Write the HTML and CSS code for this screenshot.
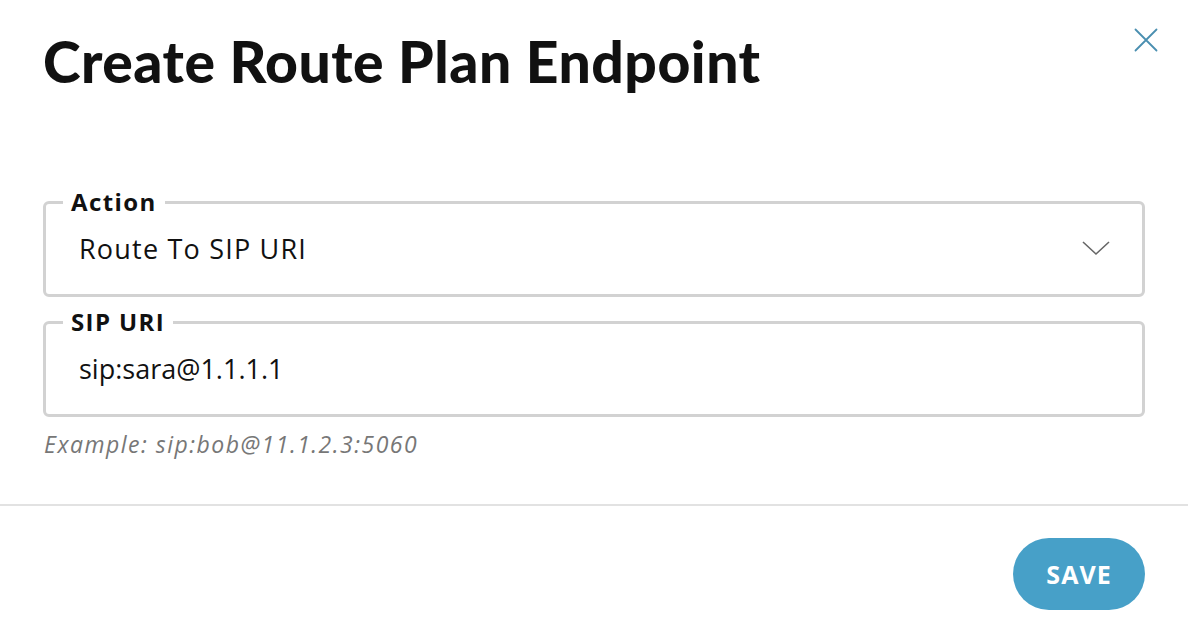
FILE: index.html
```html
<!DOCTYPE html>
<html lang="en">

<head>
    <meta charset="UTF-8">
    <meta name="viewport" content="width=device-width, initial-scale=1.0">
    <title>Create Route Plan Endpoint</title>
    <link rel="stylesheet" href="styles.css">
</head>

<body>
    <div class="modal">
        <header class="modal-header">
            <h1>Create Route Plan Endpoint</h1>
            <button class="close" aria-label="Close">
                <svg width="24" height="24" viewBox="0 0 24 24">
                    <path d="M1.5 1.5 L22.5 22.5 M22.5 1.5 L1.5 22.5" stroke="#4a8fb0" stroke-width="1.8" stroke-linecap="round" fill="none"/>
                </svg>
            </button>
        </header>

        <form class="modal-body">
            <fieldset class="field">
                <legend>Action</legend>
                <div class="select">
                    <span>Route To SIP URI</span>
                    <svg width="28" height="16" viewBox="0 0 28 16">
                        <path d="M1 2 L14 14 L27 2" stroke="#666" stroke-width="1.6" fill="none"/>
                    </svg>
                </div>
            </fieldset>
            <fieldset class="field">
                <legend>SIP URI</legend>
                <input type="text" value="sip:sara@1.1.1.1">
            </fieldset>
            <p class="hint">Example: sip:bob@11.1.2.3:5060</p>
        </form>

        <footer class="modal-footer">
            <button class="save">SAVE</button>
        </footer>
    </div>
</body>

</html>
```

FILE: styles.css
```css
body {
    margin: 0;
    background-color: #fff;
    font-family: "Open Sans", "Noto Sans", sans-serif;
    color: #111;
}

.modal {
    width: 1188px;
}

.modal-header {
    display: flex;
    justify-content: space-between;
    align-items: flex-start;
    padding: 26px 30px 0 43px;
}

.modal-header h1 {
    margin: 0;
    font-family: Lato, sans-serif;
    font-size: 57px;
    font-weight: 900;
    line-height: 70px;
    letter-spacing: 0.5px;
}

.close {
    background: none;
    border: none;
    padding: 0;
    margin-top: 2px;
    cursor: pointer;
}

.modal-body {
    padding: 92px 43px 0 43px;
}

.field {
    margin: 0 0 11px 0;
    padding: 0 32px 0 33px;
    border: 3px solid #d2d2d2;
    border-radius: 6px;
    min-width: 0;
}

.field legend {
    margin-left: -16px;
    padding: 0 8px;
    font-size: 24px;
    font-weight: 700;
    line-height: 28px;
    letter-spacing: 1.4px;
}

.select {
    display: flex;
    justify-content: space-between;
    align-items: center;
    height: 92px;
    margin-top: -14px;
    font-size: 27px;
    letter-spacing: 1.2px;
}

.field input {
    display: block;
    width: 100%;
    height: 92px;
    margin-top: -14px;
    padding: 0;
    border: none;
    outline: none;
    font-family: inherit;
    font-size: 27px;
    color: #111;
    background: transparent;
}

.hint {
    margin: 12px 0 0 1px;
    font-size: 23px;
    line-height: 30px;
    font-style: italic;
    letter-spacing: 1.5px;
    color: #777;
}

.modal-footer {
    margin-top: 45px;
    border-top: 2px solid #e2e2e2;
    padding: 32px 43px 0 0;
    display: flex;
    justify-content: flex-end;
}

.save {
    width: 132px;
    height: 72px;
    border: none;
    border-radius: 36px;
    background-color: #47a0c8;
    color: #fff;
    font-family: inherit;
    font-size: 25px;
    font-weight: 700;
    letter-spacing: 1px;
    cursor: pointer;
}
```
